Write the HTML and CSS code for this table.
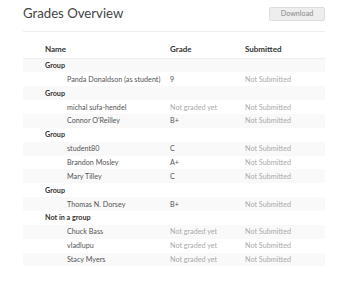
FILE: index.html
```html
<!DOCTYPE html>
<html lang="en">
<head>
<meta charset="utf-8">
<title>Grades Overview</title>
<link rel="stylesheet" href="styles.css">
</head>
<body>
<main class="page">
  <header class="page-head">
    <h1 class="title">Grades Overview</h1>
    <button class="btn" type="button">Download</button>
  </header>
  <table class="grades">
    <colgroup>
      <col class="col-name">
      <col class="col-grade">
      <col class="col-sub">
    </colgroup>
    <thead>
      <tr><th class="name-head">Name</th><th>Grade</th><th>Submitted</th></tr>
    </thead>
    <tbody>
      <tr class="group"><td colspan="3">Group</td></tr>
      <tr><td class="student">Panda Donaldson (as student)</td><td>9</td><td class="muted">Not Submitted</td></tr>
      <tr class="group"><td colspan="3">Group</td></tr>
      <tr><td class="student">michal sufa-hendel</td><td class="muted">Not graded yet</td><td class="muted">Not Submitted</td></tr>
      <tr><td class="student">Connor O'Reilley</td><td>B+</td><td class="muted">Not Submitted</td></tr>
      <tr class="group"><td colspan="3">Group</td></tr>
      <tr><td class="student">student80</td><td>C</td><td class="muted">Not Submitted</td></tr>
      <tr><td class="student">Brandon Mosley</td><td>A+</td><td class="muted">Not Submitted</td></tr>
      <tr><td class="student">Mary Tilley</td><td>C</td><td class="muted">Not Submitted</td></tr>
      <tr class="group"><td colspan="3">Group</td></tr>
      <tr><td class="student">Thomas N. Dorsey</td><td>B+</td><td class="muted">Not Submitted</td></tr>
      <tr class="group"><td colspan="3">Not in a group</td></tr>
      <tr><td class="student">Chuck Bass</td><td class="muted">Not graded yet</td><td class="muted">Not Submitted</td></tr>
      <tr><td class="student">vladlupu</td><td class="muted">Not graded yet</td><td class="muted">Not Submitted</td></tr>
      <tr><td class="student">Stacy Myers</td><td class="muted">Not graded yet</td><td class="muted">Not Submitted</td></tr>
    </tbody>
  </table>
</main>
</body>
</html>
```
FILE: styles.css
```css
html, body {
  margin: 0;
  background: #fff;
}

body {
  font-family: Lato, "Open Sans", sans-serif;
  color: #555;
}

.page {
  padding: 3px 24px 0 23px;
}

.page-head {
  display: flex;
  justify-content: space-between;
  align-items: flex-start;
  border-bottom: 1px solid #eee;
  height: 28px;
}

.title {
  margin: 0;
  font-size: 13.2px;
  font-weight: 400;
  line-height: 20px;
  color: #444;
}

.btn {
  margin-top: 4px;
  width: 56px;
  height: 14px;
  padding: 0;
  border: 1px solid #ddd;
  border-radius: 2px;
  background: #eee;
  color: #888;
  font-family: inherit;
  font-size: 7.2px;
  line-height: 12px;
}

.grades {
  width: 100%;
  border-collapse: collapse;
  table-layout: fixed;
  font-size: 7.2px;
}

.col-name { width: 147px; }
.col-grade { width: 75px; }

.grades th {
  text-align: left;
  vertical-align: bottom;
  font-weight: 700;
  color: #333;
  font-size: 8px;
  height: 26px;
  padding: 0 0 4px;
  border-bottom: 1px solid #eee;
  box-sizing: border-box;
}

.grades th.name-head {
  padding-left: 22px;
}

.grades td {
  height: 13.87px;
  padding: 0;
  white-space: nowrap;
}

.grades tbody tr:nth-child(odd) {
  background: #f9f9f9;
}

.group td {
  padding-left: 22px;
  font-weight: 700;
  color: #333;
}

.grades td.student {
  padding-left: 44px;
}

.muted {
  color: #aaa;
}
```
